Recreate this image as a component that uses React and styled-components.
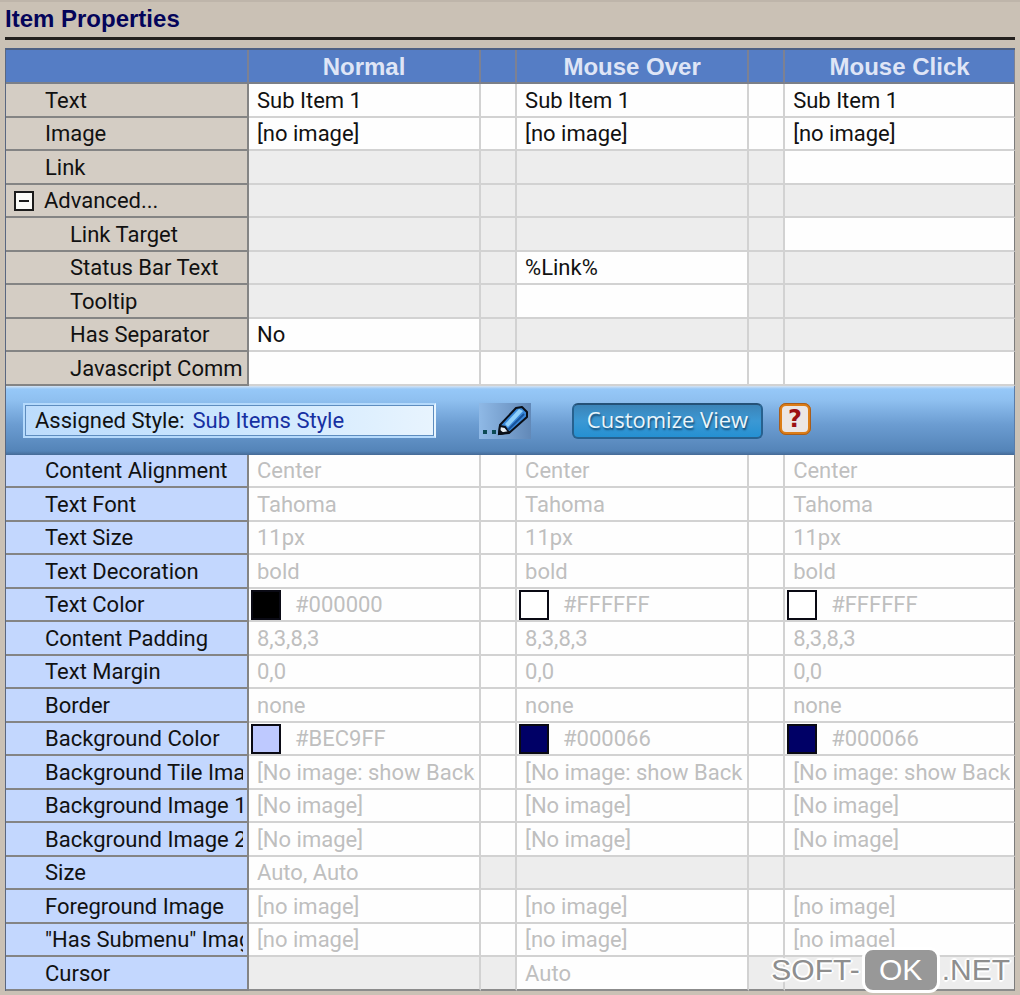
import React, { useState } from 'react';
import styled, { createGlobalStyle } from 'styled-components';

const GlobalStyle = createGlobalStyle`
    * {
        box-sizing: border-box;
    }

    body {
        margin: 0;
        background: #cac1b5;
        font-family: Roboto, "Liberation Sans", sans-serif;
        font-size: 22px;
        color: #111;
    }
`;

const Page = styled.main`
    position: relative;
    padding: 0 5px;
    border-top: 2px solid #beb5aa;
    overflow: hidden;
`;

const Title = styled.h1`
    margin: 0 0 8px;
    padding-top: 1px;
    padding-bottom: 2px;
    border-bottom: 3px solid #24211e;
    font-family: "Liberation Sans", sans-serif;
    font-size: 24px;
    line-height: 32px;
    color: #04045a;
`;

const Grid = styled.table`
    width: 100%;
    margin-bottom: 5px;
    table-layout: fixed;
    border-collapse: separate;
    border-spacing: 0;
    border-top: 2px solid #4d6084;
    border-left: 1px solid #5a6780;
`;

const LabelCol = styled.col`
    width: 243px;
`;

const ValueCol = styled.col`
    width: 23%;
`;

const LastCol = styled.col`
    width: auto;
`;

const GapCol = styled.col`
    width: 36px;
`;

const HeadRow = styled.tr`
    height: 34px;
`;

const HeadCell = styled.th`
    padding: 1px 0 0;
    background: #557dc5;
    border-right: 2px solid #7d8192;
    border-bottom: 2px solid #7b7f88;
    font-family: "Liberation Sans", sans-serif;
    font-size: 24px;
    line-height: 30px;
    color: #dfe5f6;

    &:last-child {
        border-right-width: 1px;
    }
`;

const Row = styled.tr`
    height: 33px;
`;

const ItemRows = styled.tbody`
    ${Row}:nth-child(odd) {
        height: 34px;
    }
`;

const StyleRows = styled.tbody`
    ${Row}:nth-child(even) {
        height: 34px;
    }
`;

const LabelCell = styled.th`
    padding: 0 4px 0 ${(props) => (props.$indent ? 64 : 39)}px;
    background: ${(props) => (props.$blue ? '#c3d7fe' : '#d4cdc4')};
    border-right: 2px solid #848484;
    border-bottom: 2px solid #848484;
    font-weight: 400;
    text-align: left;
`;

const ExpandCell = styled(LabelCell)`
    padding-left: 8px;
`;

const Cell = styled.td`
    padding: 0 4px 0 ${(props) => (props.$swatch ? 2 : 8)}px;
    background: ${(props) => (props.$off ? '#ededed' : '#fefefe')};
    border-right: 2px solid #d2d2d2;
    border-bottom: 2px solid #d2d2d2;
    color: ${(props) => (props.$muted ? '#bfbfbf' : '#111')};

    &:last-child {
        border-right: 1px solid #7c7c7c;
    }

    ${StyleRows} ${Row}:last-child & {
        border-bottom-color: #8c8c8c;
    }
`;

const Clip = styled.div`
    display: flex;
    align-items: center;
    gap: 14px;
    padding-top: 1px;
    overflow: hidden;
    white-space: pre;
    line-height: 30px;
`;

const Swatch = styled.span`
    flex: none;
    width: 30px;
    height: 30px;
    border: 2px solid #0a0a14;
    background: ${(props) => props.$color};
`;

const Expander = styled.button`
    display: flex;
    align-items: center;
    gap: 10px;
    padding: 0;
    border: 0;
    background: none;
    font: inherit;
    line-height: 30px;
    color: inherit;
`;

const BandCell = styled.td`
    padding: 0;
    border-right: 1px solid #5a7ca8;
`;

const Band = styled.div`
    display: flex;
    align-items: center;
    height: 69px;
    padding: 0 17px;
    background: linear-gradient(#d5e3f3 0, #96c8f8 3px, #8fc0f0 14px, #6c9dd2 38px, #5484b8 65px, #456a96 69px);
`;

const StyleField = styled.label`
    display: flex;
    align-items: center;
    gap: 8px;
    width: 413px;
    height: 35px;
    padding: 0 10px;
    border: 2px solid #b5dafc;
    border-right-color: #e8f5ff;
    outline: 1px solid #5e8dbf;
    outline-offset: -3px;
    background: linear-gradient(90deg, #bcdcfc, #cbe6fe 50%, #e8f4fe);
`;

const StyleInput = styled.input`
    flex: 1;
    min-width: 0;
    padding: 0;
    border: 0;
    background: none;
    font: inherit;
    color: #1730a2;
`;

const EditButton = styled.button`
    display: block;
    width: 52px;
    height: 36px;
    margin-left: 43px;
    padding: 0;
    border: 0;
    background: linear-gradient(90deg, #8fb9e6, #6289b8);
`;

const CustomizeButton = styled.button`
    width: 191px;
    height: 36px;
    margin-left: 41px;
    padding: 0 0 4px;
    border: 2px solid #27618f;
    border-top-color: #255177;
    border-radius: 6px;
    background: linear-gradient(#3c84b8, #3b98d4 50%, #2590d2);
    font-family: "Open Sans", "Noto Sans", sans-serif;
    font-size: 22px;
    font-weight: 500;
    line-height: 28px;
    color: #eaf5fb;
    text-shadow: 1px 2px 2px #17486f;
`;

const HelpButton = styled.button`
    width: 32px;
    height: 32px;
    margin-left: 16px;
    margin-bottom: 4px;
    padding: 0;
    border: 3px solid #dc7d17;
    outline: 1px solid #a65d1e;
    outline-offset: -1px;
    border-radius: 7px;
    background: #ece6e4;
    font-family: "DejaVu Sans", sans-serif;
    font-size: 24px;
    font-weight: 700;
    line-height: 26px;
    color: #9c1013;
`;

const Watermark = styled.div`
    position: absolute;
    right: 10px;
    bottom: 3px;
    display: flex;
    align-items: center;
    gap: 2px;
    font-family: "Liberation Sans", sans-serif;
    font-size: 30px;
    line-height: 40px;
    color: #8e8e8e;
    text-shadow: 2px 0 1px #fff, -2px 0 1px #fff, 0 2px 1px #fff, 0 -2px 1px #fff, 1px 1px 1px #fff, -1px -1px 1px #fff;
`;

const Badge = styled.span`
    width: 78px;
    height: 46px;
    border: 3px solid #fff;
    border-radius: 11px;
    background: #989898;
    text-align: center;
    text-shadow: none;
    color: #fff;
`;

const MinusBox = () => (
    <svg width="20" height="20" viewBox="0 0 20 20" aria-hidden="true">
        <rect x="1" y="1" width="18" height="18" fill="#fbfbf8" stroke="#1b1b1b" strokeWidth="2" />
        <path d="M5 10H15" stroke="#1b1b1b" strokeWidth="2" />
    </svg>
);

const Pencil = () => (
    <svg width="52" height="36" viewBox="0 0 52 36" aria-hidden="true">
        <rect x="4" y="27" width="4" height="4" fill="#0c4a55" />
        <rect x="13" y="27" width="4" height="4" fill="#0c4a55" />
        <path d="M21 22L37 5L43 4L48 9V14L30 30L20 31Z" fill="#3987d8" stroke="#0a0f18" strokeWidth="2" strokeLinejoin="round" />
        <path d="M26 21L40 6L44 8L29 24Z" fill="#8fd0fb" />
        <path d="M21 23L26 24L30 29L20 31Z" fill="#e6eef3" stroke="#0a0f18" strokeWidth="2" />
        <path d="M20 26L26 31L20 32Z" fill="#0a0f18" />
        <path d="M29 27L45 11" stroke="#17539b" strokeWidth="2" />
    </svg>
);

// null = celula desativada
const same = (value) => [value, value, value];

const itemRows = [
    { label: 'Text', values: same('Sub Item 1') },
    { label: 'Image', values: same('[no image]') },
    { label: 'Link', values: [null, null, ''] },
    { label: 'Advanced...', values: same(null), expander: true },
    { label: 'Link Target', values: [null, null, ''], child: true },
    { label: 'Status Bar Text', values: [null, '%Link%', null], child: true },
    { label: 'Tooltip', values: [null, '', null], child: true },
    { label: 'Has Separator', values: ['No', null, null], child: true },
    { label: 'Javascript Command', values: same(''), child: true },
];

const styleRows = [
    { label: 'Content Alignment', values: same('Center') },
    { label: 'Text Font', values: same('Tahoma') },
    { label: 'Text Size', values: same('11px') },
    { label: 'Text Decoration', values: same('bold') },
    { label: 'Text Color', values: ['#000000', '#FFFFFF', '#FFFFFF'], color: true },
    { label: 'Content Padding', values: same('8,3,8,3') },
    { label: 'Text Margin', values: same('0,0') },
    { label: 'Border', values: same('none') },
    { label: 'Background Color', values: ['#BEC9FF', '#000066', '#000066'], color: true },
    { label: 'Background Tile Image', values: same('[No image: show Background]') },
    { label: 'Background Image 1', values: same('[No image]') },
    { label: 'Background Image 2', values: same('[No image]') },
    { label: 'Size', values: ['Auto, Auto', null, null] },
    { label: 'Foreground Image', values: same('[no image]') },
    { label: '"Has Submenu" Image', values: same('[no image]') },
    { label: 'Cursor', values: [null, 'Auto', null] },
];

function PropertyRow({ row, blue, open, onToggle }) {
    const gapOff = row.values.includes(null);

    return (
        <Row>
            {row.expander ? (
                <ExpandCell scope="row">
                    <Expander type="button" aria-expanded={open} onClick={onToggle}>
                        <MinusBox />
                        {row.label}
                    </Expander>
                </ExpandCell>
            ) : (
                <LabelCell scope="row" $blue={blue} $indent={row.child}>
                    <Clip>{row.label}</Clip>
                </LabelCell>
            )}
            {row.values.map((value, i) => (
                <React.Fragment key={i}>
                    {i > 0 && <Cell $off={gapOff} />}
                    <Cell $off={value === null} $muted={blue} $swatch={row.color}>
                        {value && (
                            <Clip>
                                {row.color && <Swatch $color={value} />}
                                {value}
                            </Clip>
                        )}
                    </Cell>
                </React.Fragment>
            ))}
        </Row>
    );
}

function App() {
    const [open, setOpen] = useState(true);
    const [styleName, setStyleName] = useState('Sub Items Style');

    return (
        <Page>
            <GlobalStyle />
            <Title>Item Properties</Title>
            <Grid>
                <colgroup>
                    <LabelCol />
                    <ValueCol />
                    <GapCol />
                    <ValueCol />
                    <GapCol />
                    <LastCol />
                </colgroup>
                <thead>
                    <HeadRow>
                        <HeadCell />
                        <HeadCell scope="col">Normal</HeadCell>
                        <HeadCell />
                        <HeadCell scope="col">Mouse Over</HeadCell>
                        <HeadCell />
                        <HeadCell scope="col">Mouse Click</HeadCell>
                    </HeadRow>
                </thead>
                <ItemRows>
                    {itemRows.filter((row) => open || !row.child).map((row) => (
                        <PropertyRow key={row.label} row={row} open={open} onToggle={() => setOpen(!open)} />
                    ))}
                </ItemRows>
                <tbody>
                    <tr>
                        <BandCell colSpan={6}>
                            <Band>
                                <StyleField>
                                    Assigned Style:
                                    <StyleInput value={styleName} onChange={(e) => setStyleName(e.target.value)} />
                                </StyleField>
                                <EditButton type="button" aria-label="Edit style">
                                    <Pencil />
                                </EditButton>
                                <CustomizeButton type="button">Customize View</CustomizeButton>
                                <HelpButton type="button">?</HelpButton>
                            </Band>
                        </BandCell>
                    </tr>
                </tbody>
                <StyleRows>
                    {styleRows.map((row) => (
                        <PropertyRow key={row.label} row={row} blue />
                    ))}
                </StyleRows>
            </Grid>
            <Watermark>
                <span>SOFT-</span>
                <Badge>OK</Badge>
                <span>.NET</span>
            </Watermark>
        </Page>
    );
}

export default App;
